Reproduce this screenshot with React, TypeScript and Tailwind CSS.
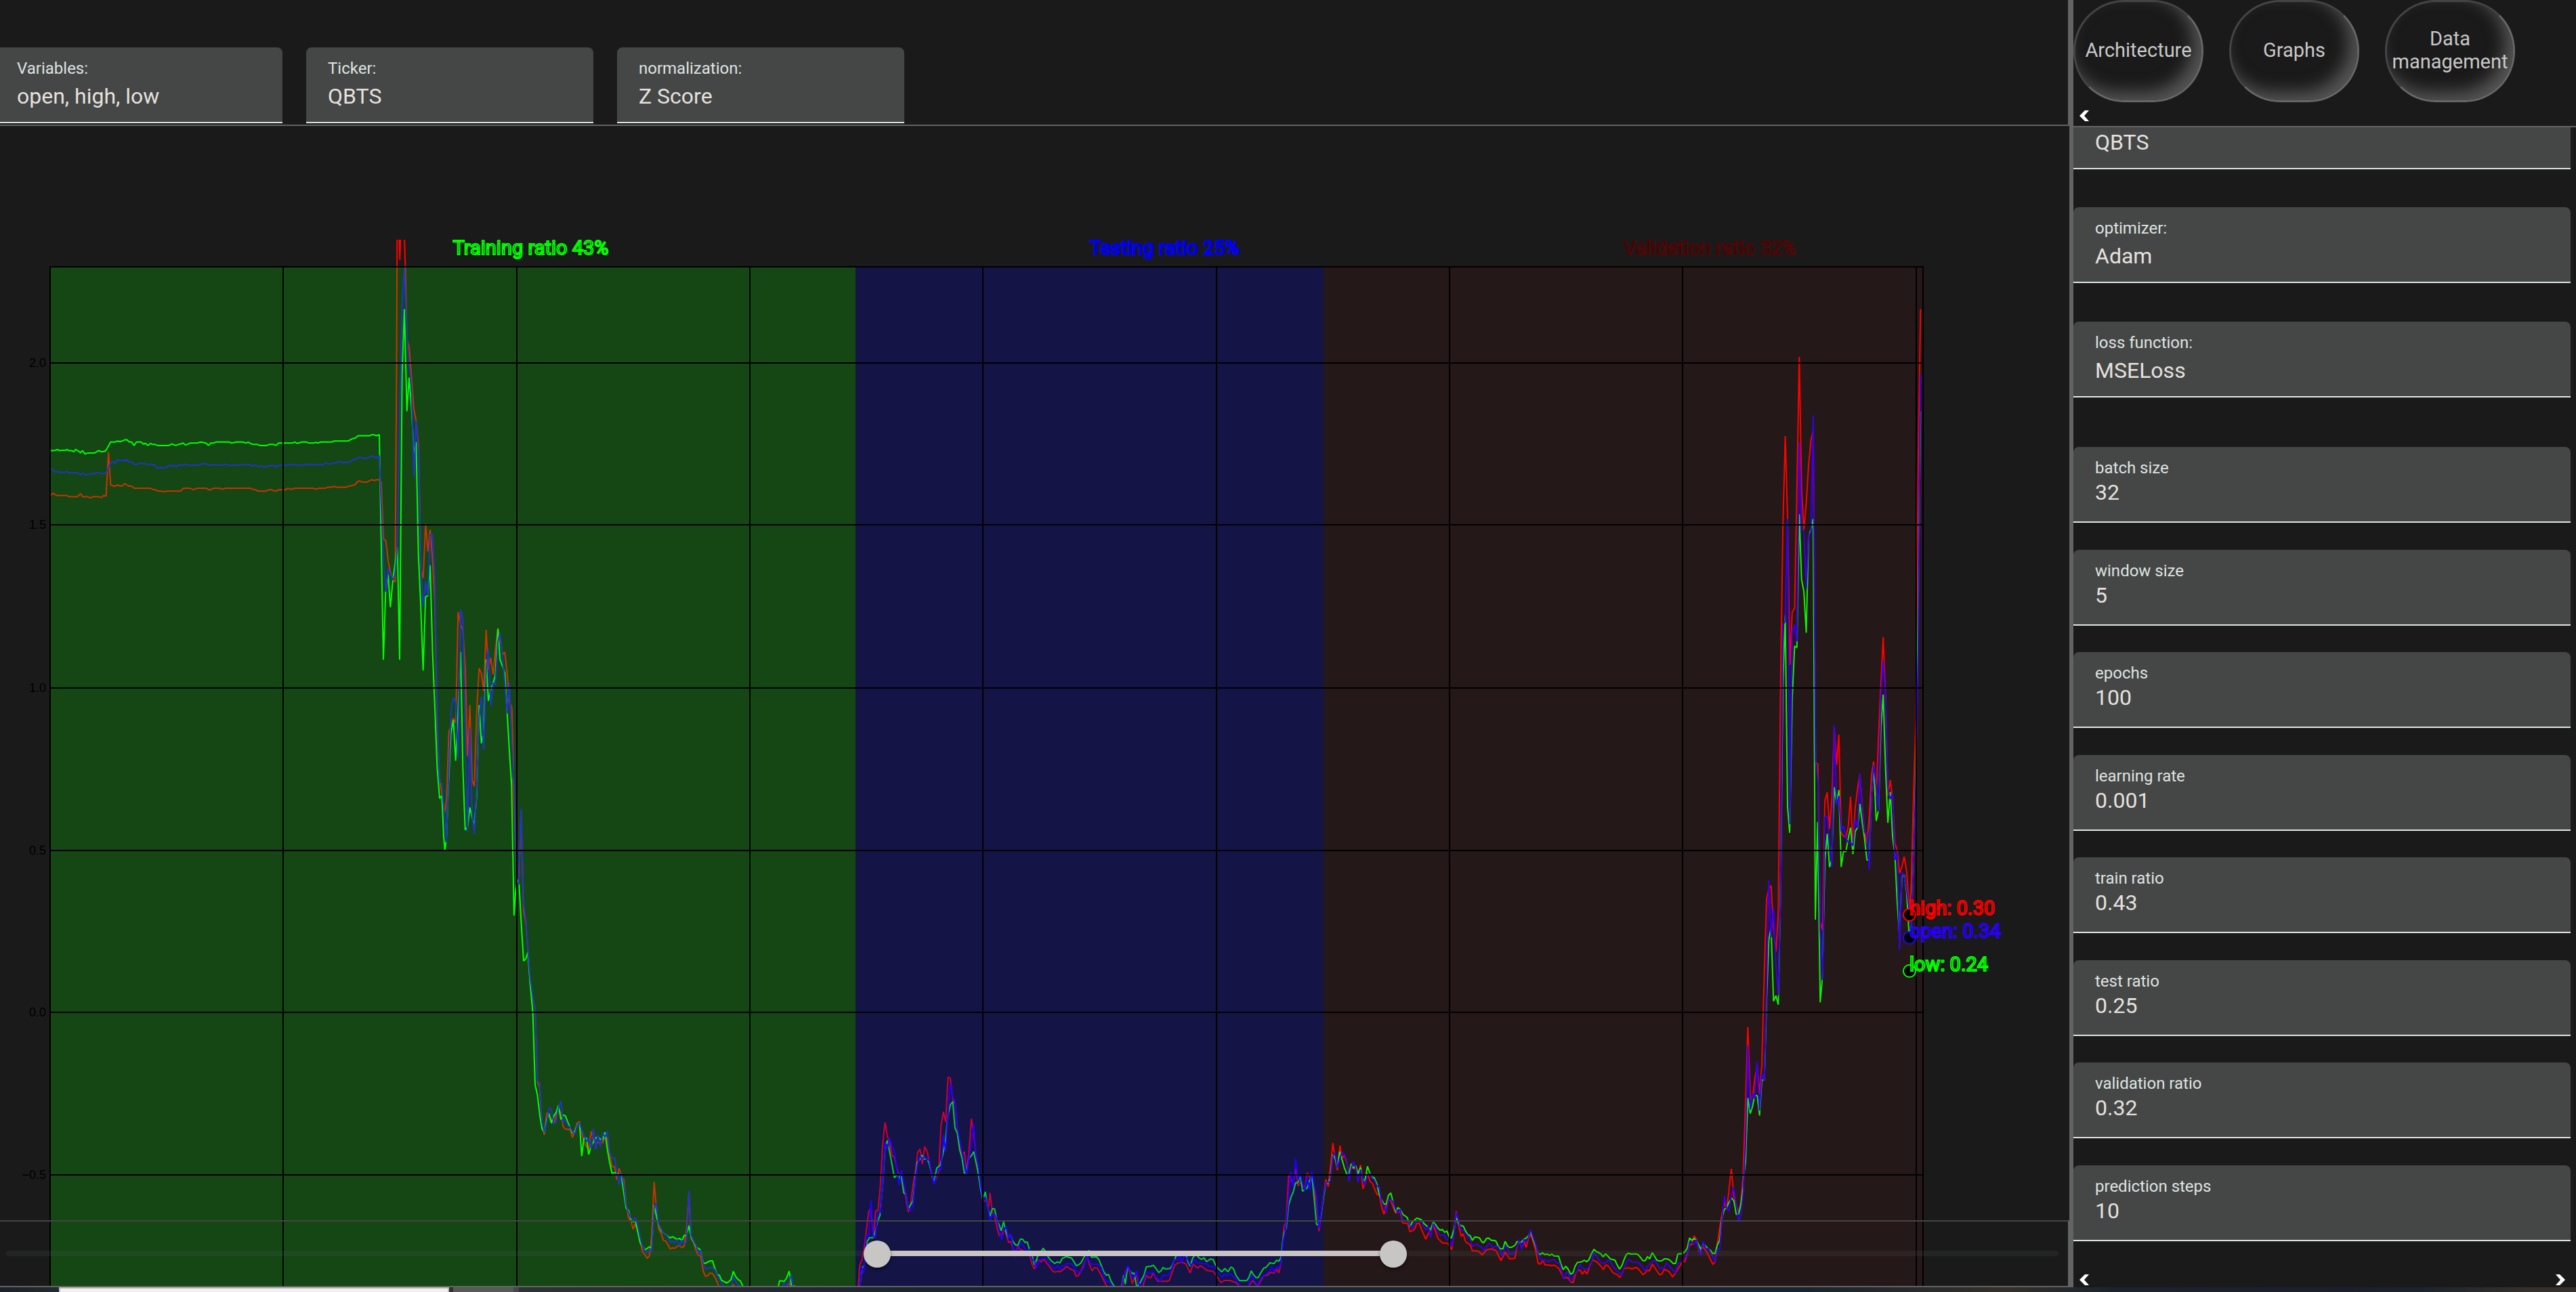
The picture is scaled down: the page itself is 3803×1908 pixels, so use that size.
import React, { useState } from "react";

/* ---------- chart data ---------- */

type Segment = { origin: [number, number]; scale: [number, number]; points: string };

/* Sections of the time axis; each stores its samples on its own local grid. */
const intro = { origin: [0, 340] as [number, number], scale: [1.96, 1.96] as [number, number] };
const peak = { origin: [550, 340] as [number, number], scale: [3, 1.7422] as [number, number] };
const fall = { origin: [700, 1150] as [number, number], scale: [2.4123, 2.0686] as [number, number] };
const test = { origin: [1240, 1550] as [number, number], scale: [1.7422, 3] as [number, number] };
const valley = { origin: [1850, 1650] as [number, number], scale: [2.0907, 3] as [number, number] };
const climb = { origin: [2400, 1250] as [number, number], scale: [3, 2.383] as [number, number] };
const finale = { origin: [2450, 400] as [number, number], scale: [2.6133, 1.4255] as [number, number] };

const low: Segment[] = [
  { ...intro, points: "145,637 153,638 160,637 166,635 173,638 180,637 188,637 194,635 200,638 207,638 214,641 219,634 225,638 233,644 239,638 246,648 253,645 260,645 273,645 280,641 286,638 293,641 300,641 306,638 313,626 320,613 333,613 340,610 347,612 354,610 360,607 367,606 374,613 381,613 388,623 395,613 408,613 415,619 421,617 428,623 435,617 442,620 449,620 456,623 489,623 496,619 502,620 509,623 516,620 522,619 530,616 537,622 544,619 550,616 571,616 580,613 587,614 597,617 603,623 610,616 617,616 624,613 664,613 670,616 685,613 704,613 711,616 718,613 725,617 732,620 745,620 752,623 772,623 779,620 792,620 799,623 806,616 846,616 853,613 860,617 874,613 887,613 894,616 907,616 914,614 920,616 928,613 960,613 967,610 1008,610 1015,606 1021,603 1028,602 1036,595 1069,595 1076,592 1082,592 1089,595 1096,592" },
  { ...peak, points: "30,526 37,760 48,1105 58,932 69,886 79,970 90,900 100,858 110,815 120,1105 131,370 141,203 152,466 162,379 172,450 183,575 193,545 203,835 213,960 224,1133 235,943 245,940 255,862 266,1090 276,1230 286,1380 297,1462 307,1455 315,1560 320,1595 327,1568 335,1440 347,1295 358,1260 368,1365 379,1240 390,1085 400,1380 410,1543 421,1535 431,1485 441,1510 451,1530 461,1455 472,1222 482,1320 492,1290 503,1104 513,1211 524,1180 534,1165 544,1145 555,1025 565,1105 576,1122 586,1140 596,1240 606,1340 616,1430" },
  { ...fall, points: "133,0 136,150 142,418 148,340 155,308 160,320 167,430 176,557 184,550 191,530 200,630 209,715 217,935 225,965 234,1030 242,1070 250,1080 259,1040 266,1022 275,1052 284,1030 292,1020 300,998 309,1041 317,1027 325,1030 334,1050 350,1082 359,1078 367,1058 375,1050 383,1153 391,1098 400,1098 408,1148 417,1120 425,1110 433,1097 442,1095 450,1102 458,1102 466,1080 474,1130 482,1170 491,1205 500,1203 508,1205 516,1210 524,1212 533,1265 541,1312 549,1318 558,1345 566,1354 574,1350 583,1385 591,1417 600,1430 608,1440 624,1430 632,1433 641,1304 649,1335 657,1362 666,1380 674,1388 682,1392 690,1398 698,1403 706,1399 714,1403 724,1408 732,1404 740,1412 748,1395 756,1395 765,1365 773,1400 782,1415 790,1430 807,1440 816,1480 824,1480 840,1473 849,1473 857,1495 865,1515 873,1516 881,1532 898,1540 906,1537 915,1530 923,1505 931,1520 940,1530 948,1534 958,1552 1000,1600 1080,1560 1088,1534 1096,1534 1104,1536 1113,1525 1122,1504 1130,1547 1145,1552 1200,1640 1350,1640" },
  { ...test, points: "45,1100 51,1050 57,965 62,960 70,850 76,833 86,833 92,800 97,760 103,735 110,600 116,430 122,403 128,455 134,510 140,568 146,555 152,570 157,550 164,635 170,640 176,705 183,685 188,670 194,570 199,500 205,487 211,467 217,485 223,485 229,500 235,540 242,590 249,525 258,512 264,470 271,410 278,290 284,245 290,230 296,348 302,370 308,445 314,480 320,548 326,540 332,480 338,470 344,452 350,500 356,550 362,620 368,665 374,630 379,690 386,738 392,705 398,706 404,760 409,775 415,803 421,763 427,805 433,835 439,820 445,850 452,866 458,866 464,840 470,840 476,855 482,852 488,890 494,910 500,953 506,930 512,898 518,893 523,880 530,898 536,920 543,935 553,948 559,940 566,945 572,925 583,917 596,924 602,940 608,958 614,953 620,945 626,925 635,900 641,890 647,920 660,918 666,930 672,955 679,985 685,1000 691,996 697,1025 706,1050 715,1100 724,1050 730,1000 734,1040 740,960 746,980 752,992 757,990 763,1050 770,1040 776,1020 782,1000 788,962 800,960 806,955 812,968 820,988 826,980 831,965 837,972 849,970 855,955 861,930 867,905 875,900 890,905 895,940 901,960 907,925 915,905 922,920 930,930 936,922 943,940 953,928 960,930 966,955 972,968 982,985 990,970 998,985 1006,963 1012,970 1018,998 1028,1024 1046,1024 1052,1010 1058,980 1064,998 1070,1010 1076,1010 1082,990 1090,968 1096,965 1106,945 1117,948 1123,933 1129,938 1135,918 1138,860 1142,815 1148,790 1154,690 1160,655 1166,630 1172,590 1178,590 1184,555 1190,628 1196,620 1202,613 1208,580 1214,560 1220,665 1226,775 1232,778 1238,730 1244,650" },
  { ...valley, points: "225,292 232,290 238,270 246,165 253,180 260,225 267,152 275,190 282,225 289,250 296,250 303,206 310,225 317,215 324,250 332,222 339,282 346,275 353,217 361,250 367,265 374,268 382,295 389,340 396,365 404,384 411,385 418,345 425,335 432,375 440,420 447,400 454,408 462,430 470,438 476,445 484,485 491,465 498,455 505,447 513,450 520,455 527,470 535,480 541,490 548,497 556,465 563,475 570,490 577,500 584,497 591,510 598,503 606,533 612,535 620,495 627,445 634,470 641,480 649,482 656,505 663,520 670,525 677,545 684,530 692,532 699,535 706,552 712,556 720,537 727,535 735,545 742,545 749,548 756,570 763,583 771,583 778,550 785,570 792,577 799,575 808,567 815,550 822,555 829,552 836,540 843,535 850,525 857,507 864,540 872,570 879,600 886,608 893,600 900,608 908,606 915,612 922,606 929,614 943,615 950,650 957,675 965,660 972,672 980,695 987,690 994,660 1001,643 1008,642 1015,640 1022,633 1030,640 1037,630 1044,605 1052,585 1059,595 1067,600 1073,605 1080,618 1088,605 1095,615 1103,628 1110,630 1117,633 1124,655 1131,673 1138,658 1145,630 1152,608 1159,602 1167,606 1174,605 1181,605 1188,608 1195,620 1203,635 1210,635 1217,617 1224,627 1232,600 1239,615 1246,633 1254,637 1262,635 1269,627 1276,627 1283,630 1290,638 1297,648 1304,648 1311,605 1326,604 1333,595 1340,580 1347,535 1354,545 1361,537 1368,545 1375,565 1382,585 1389,560 1396,570 1405,582 1412,590 1419,604 1426,602 1433,565 1440,545 1447,450 1454,408 1461,402 1468,378 1477,358 1484,370 1491,430 1498,430 1505,390 1512,320" },
  { ...climb, points: "523,1160 531,1110 541,885 552,940 562,915 572,875 583,878 593,947 603,822 614,822 624,540 634,330 644,285 655,545 665,525" },
  { ...finale, points: "458,1545 467,1300 476,870 485,725 494,1128 502,1183 512,900 521,790 530,793 539,512 548,650 557,675 566,762 575,560 584,545 593,522 601,1366 610,1160 620,1540 628,1490 638,1240 647,1185 656,1255 664,1240 674,1087 683,1120 692,1093 701,1255 710,1221 719,1223 728,1195 737,1172 746,1228 755,1180 764,1172 773,1122 782,1160 791,1195 800,1240 809,1240 818,1100 826,1040 836,1158 845,1135 854,960 863,892 872,1050 881,1162 890,1097 899,1190 908,1230 917,1330 926,1400 935,1275 944,1272 953,1305 962,1390 970,1390 980,1240 989,1050 998,700 1007,296" },
];

const open: Segment[] = [
  { ...intro, points: "145,690 152,692 159,700 166,698 173,701 186,701 193,698 200,702 225,702 233,708 239,702 246,707 253,708 260,705 272,705 280,702 286,701 293,704 300,705 307,702 313,690 320,673 327,670 334,675 340,663 347,668 354,665 361,669 367,663 374,672 381,670 388,677 395,679 408,673 415,676 422,676 428,679 435,677 449,680 456,690 463,685 468,690 475,687 482,686 489,680 496,683 503,680 509,686 516,680 530,680 537,677 543,680 577,680 585,676 597,676 604,680 617,680 624,677 632,680 645,680 651,677 658,680 698,680 704,677 711,680 718,677 732,683 739,680 746,683 759,683 765,687 772,683 786,681 792,680 799,686 806,680 833,680 840,677 847,680 854,678 860,680 874,680 880,677 887,680 893,677 907,680 914,677 921,680 928,677 934,680 941,673 948,676 962,675 975,672 981,669 988,672 1008,672 1021,665 1035,660 1042,657 1049,660 1062,660 1076,653 1089,660 1096,653" },
  { ...peak, points: "30,580 38,700 49,860 59,930 69,870 79,885 90,900 100,885 110,815 120,470 131,185 141,95 152,270 162,345 173,410 183,635 193,490 204,575 214,860 224,970 235,903 245,940 255,783 266,784 276,900 287,1270 297,1420 307,1422 317,1500 327,1575 337,1400 348,1235 358,1202 368,1215 379,1360 390,976 400,1000 410,1290 420,1548 431,1280 441,1500 451,1553 461,1440 472,1250 482,1200 492,1337 503,1130 513,1077 524,1224 534,1165 544,1170 555,1060 565,1035 576,1100 586,1170 597,1243 606,1163 616,1310 627,1430" },
  { ...fall, points: "142,0 147,140 151,325 159,322 167,92 176,380 184,430 191,520 200,610 209,665 217,705 225,925 233,928 242,1050 250,1080 259,1048 267,1005 275,1010 284,1055 292,1050 300,1005 309,985 317,1052 325,1042 334,1060 342,1065 350,1078 359,1085 367,1060 375,1050 383,1072 391,1088 400,1108 408,1098 417,1130 425,1068 433,1133 441,1087 450,1125 458,1083 466,1095 474,1077 483,1140 491,1160 500,1157 508,1205 516,1241 524,1203 533,1240 541,1300 549,1325 558,1340 566,1350 574,1340 583,1365 591,1400 600,1430 608,1442 616,1447 624,1438 632,1445 641,1310 649,1297 657,1360 666,1375 674,1388 682,1392 690,1400 698,1417 706,1410 714,1420 724,1408 732,1427 740,1410 748,1420 756,1415 765,1258 773,1395 782,1412 790,1425 800,1450 808,1440 816,1485 824,1497 849,1493 857,1500 873,1530 882,1540 890,1555 915,1550 923,1522 931,1535 940,1545 960,1570 1090,1560 1104,1540 1113,1550 1122,1535 1130,1515 1136,1560 1200,1640 1350,1640" },
  { ...test, points: "49,1100 56,965 61,990 68,825 74,830 80,668 86,830 91,832 98,720 104,722 110,600 116,412 122,440 128,393 134,430 140,450 146,520 152,600 158,535 164,590 170,640 176,705 182,713 188,695 194,575 200,510 206,470 212,485 218,475 224,490 230,487 236,550 242,597 248,560 254,525 260,535 266,378 272,450 278,290 284,150 290,210 296,230 302,340 308,400 314,450 320,500 326,558 332,480 338,420 344,328 350,470 356,510 362,600 368,660 374,655 380,695 386,762 392,730 398,730 404,755 410,800 416,843 422,800 428,783 434,840 440,815 446,885 452,890 458,885 464,857 470,862 476,885 482,892 488,885 494,930 500,935 506,968 512,930 518,930 525,925 530,925 540,950 548,965 553,972 560,955 566,975 572,958 578,960 583,948 596,950 602,960 608,985 620,985 627,965 636,915 642,940 648,952 660,950 666,955 672,965 679,1000 685,1030 691,1025 697,1040 706,1070 720,1100 728,1020 734,995 740,957 746,980 752,1010 758,1005 763,978 770,1045 780,1030 788,985 794,992 800,992 806,985 812,1005 824,1027 830,1000 842,1002 849,990 855,960 861,930 868,935 875,900 878,945 885,915 893,925 903,958 912,930 920,945 943,948 950,962 962,960 972,985 982,1010 990,992 996,1003 1004,992 1018,1015 1030,1050 1050,1050 1058,1000 1064,1020 1074,1045 1084,1010 1096,995 1106,980 1111,962 1117,985 1123,962 1129,970 1135,940 1140,850 1146,800 1152,700 1160,540 1166,610 1172,485 1178,580 1184,550 1190,590 1196,625 1202,565 1208,620 1214,540 1220,600 1226,650 1232,790 1238,720 1244,640" },
  { ...valley, points: "225,290 238,285 246,175 253,157 260,225 267,185 275,153 282,165 289,190 296,285 303,225 310,195 317,225 324,290 332,232 339,280 346,300 353,255 361,250 367,270 374,278 382,305 389,308 396,370 404,395 411,420 418,363 425,363 432,375 440,408 447,425 454,407 462,457 476,457 484,480 491,495 498,470 505,457 513,462 520,462 527,485 534,500 541,482 548,533 556,470 563,485 570,508 577,523 591,520 598,543 606,537 613,573 620,520 627,420 634,455 641,497 649,500 656,515 670,540 677,572 684,565 692,563 699,572 706,575 714,592 722,570 729,558 742,580 749,570 756,575 770,615 778,570 785,580 792,608 808,600 815,570 822,542 829,587 836,540 843,555 850,530 857,497 864,530 872,562 879,600 886,625 893,635 900,628 908,640 922,633 929,630 936,645 946,645 953,685 959,717 966,690 972,683 980,728 990,700 1001,680 1009,650 1016,668 1030,675 1042,655 1052,600 1059,612 1067,630 1074,645 1088,645 1097,632 1103,640 1110,660 1124,682 1138,700 1145,665 1152,645 1160,630 1170,642 1190,643 1200,660 1210,680 1218,658 1230,643 1240,632 1247,650 1254,668 1268,670 1276,645 1290,668 1304,690 1311,648 1325,640 1333,618 1340,618 1347,552 1354,555 1361,565 1368,543 1375,580 1382,612 1389,548 1397,583 1405,580 1412,600 1426,640 1433,585 1440,587 1447,460 1455,347 1462,405 1469,415 1476,345 1483,310 1491,380 1499,463 1506,430 1514,320" },
  { ...climb, points: "521,1200 531,1050 541,700 552,927 562,870 572,888 582,757 593,930 603,800 614,825 624,500 634,118 644,320 655,215 665,420" },
  { ...finale, points: "458,1525 467,1310 476,745 485,738 494,522 503,1165 512,760 521,745 530,780 539,361 548,545 557,547 566,670 575,558 584,550 593,304 602,1030 611,1075 620,1385 629,1493 638,1150 647,1148 656,1200 665,1255 674,956 683,1125 692,1105 701,1180 710,1168 719,1195 728,1203 737,1203 746,1210 755,1155 764,1172 773,1058 782,1130 791,1182 800,1182 809,1260 818,1100 826,1040 836,1085 845,1138 854,900 863,820 872,900 881,1090 890,1112 899,1100 908,1240 917,1225 926,1430 935,1265 944,1275 953,1300 962,1340 971,1385 980,1240 989,1080 998,800 1007,218" },
];

const high: Segment[] = [
  { ...intro, points: "147,767 153,761 160,765 166,768 193,768 200,771 225,771 233,762 239,771 253,771 262,775 270,771 286,771 293,774 300,768 307,770 314,642 320,737 327,740 334,741 340,737 347,740 354,740 361,733 367,737 374,741 381,741 388,747 435,747 442,750 449,751 456,755 468,755 475,758 482,755 523,755 530,747 550,747 560,751 570,747 597,747 604,751 610,751 617,747 637,747 644,750 651,747 725,747 732,750 739,751 746,755 770,755 779,751 785,751 792,754 799,755 806,751 826,751 833,747 840,750 854,747 907,747 914,750 921,747 941,747 948,744 960,744 967,741 974,744 1001,744 1008,741 1015,740 1028,736 1036,726 1042,726 1049,729 1062,729 1076,722 1083,725 1089,722 1096,722" },
  { ...peak, points: "30,642 38,648 49,795 59,799 69,850 79,880 90,900 100,905 106,400 109,0 117,0 121,76 125,0 140,0 146,110 152,280 162,300 173,385 183,460 193,490 204,555 214,870 224,895 235,755 245,826 255,770 266,850 276,960 287,1300 297,1410 307,1450 318,1500 328,1465 338,1290 348,1275 358,1255 368,1268 379,982 390,1015 400,1028 411,1130 420,1353 431,1222 441,1415 451,1430 461,1240 472,1127 482,1140 492,1186 503,1028 513,1130 523,1100 534,1143 544,1080 555,1025 565,1050 576,1092 586,1086 596,1140 606,1212 617,1230 624,1380" },
  { ...fall, points: "139,0 146,180 151,320 159,325 167,100 176,405 184,440 192,530 200,630 209,670 217,705 225,928 233,940 242,1060 250,1088 259,1020 267,1030 275,1040 284,1052 292,1030 300,1010 309,1020 317,1063 325,1070 342,1072 350,1096 359,1075 367,1052 375,1047 383,1080 391,1110 400,1125 408,1130 417,1077 425,1105 433,1112 458,1112 466,1090 474,1100 483,1150 491,1185 500,1185 508,1225 516,1190 524,1212 533,1225 541,1295 549,1340 558,1350 566,1376 574,1360 583,1385 591,1415 600,1446 608,1453 616,1465 624,1458 632,1400 641,1232 649,1310 657,1375 666,1390 674,1410 682,1412 698,1436 706,1433 714,1435 724,1428 732,1427 740,1432 748,1428 756,1380 765,1265 773,1405 782,1418 790,1440 798,1456 807,1458 816,1505 824,1520 832,1518 840,1510 849,1512 857,1522 865,1537 873,1555 915,1560 923,1545 930,1560 1100,1565 1122,1540 1135,1570 1200,1640 1350,1640" },
  { ...test, points: "45,1100 51,955 57,930 63,870 68,800 74,718 80,700 86,835 92,713 98,713 104,600 110,420 116,322 122,385 128,410 134,468 140,478 146,520 152,560 158,555 164,610 170,660 176,720 182,680 188,600 194,540 200,457 206,440 212,508 218,430 224,450 230,500 236,560 242,590 248,570 254,540 260,340 266,275 272,320 278,122 284,127 290,220 296,240 302,350 308,420 314,470 320,452 326,540 332,450 338,306 344,370 350,470 356,530 362,610 368,670 376,672 382,700 386,635 392,720 398,735 404,790 410,825 416,820 422,798 428,820 434,855 440,850 446,890 452,915 458,870 464,885 475,895 482,900 488,910 494,950 500,973 506,930 518,940 524,928 536,955 548,983 554,986 560,982 566,985 572,978 584,960 590,970 602,980 608,1005 614,1000 620,980 628,950 636,915 642,955 649,980 655,965 662,968 672,1000 685,1045 700,1070 722,1090 734,985 740,960 746,990 752,1038 758,1010 764,1000 770,1070 780,1045 788,1000 794,1010 800,1010 806,990 812,1010 818,1027 842,1027 848,1020 855,985 861,955 870,945 880,942 890,950 901,990 908,950 920,968 926,958 932,962 943,978 960,983 968,1000 980,1033 988,1023 1003,1023 1018,1032 1030,1050 1050,1050 1062,1023 1074,1050 1090,1003 1100,1000 1106,988 1117,990 1123,972 1129,990 1135,940 1142,785 1148,760 1154,555 1160,570 1166,600 1172,525 1178,605 1184,590 1190,600 1196,615 1202,545 1208,565 1214,570 1220,620 1226,690 1232,805 1238,730 1244,640 1250,575" },
  { ...valley, points: "232,307 238,230 246,114 253,180 260,235 268,125 275,180 282,170 289,200 296,250 303,225 310,225 317,230 324,250 332,211 339,318 346,290 353,245 361,285 368,292 375,318 383,342 390,345 397,400 404,430 411,390 418,362 425,370 432,398 440,425 447,420 454,420 462,468 477,470 484,507 491,503 498,497 505,470 513,470 520,497 533,540 541,515 548,500 556,475 563,505 570,535 584,557 598,557 606,567 613,587 620,510 627,415 634,475 642,528 648,515 656,552 670,565 677,592 692,592 699,597 707,610 720,588 735,583 750,590 765,635 778,598 792,627 808,625 815,570 822,550 829,580 836,548 843,577 850,535 857,520 864,550 872,590 880,648 887,650 894,632 901,655 915,655 922,658 930,655 943,668 952,692 958,712 972,710 980,730 988,733 996,690 1003,678 1010,678 1016,695 1023,680 1031,695 1040,655 1048,632 1060,640 1074,660 1081,675 1088,655 1095,657 1103,672 1110,688 1124,697 1131,710 1138,695 1145,670 1160,667 1168,672 1182,665 1190,673 1203,697 1210,690 1217,677 1224,680 1232,650 1239,665 1254,697 1262,695 1269,673 1276,678 1283,683 1295,707 1304,690 1311,672 1325,640 1333,638 1340,605 1347,563 1354,565 1361,525 1368,540 1377,598 1389,575 1397,590 1405,610 1419,652 1426,640 1433,560 1440,490 1447,430 1455,375 1462,408 1469,320 1476,228 1484,350 1491,385 1499,430 1506,370 1512,270" },
  { ...climb, points: "529,950 541,635 553,892 563,880 573,810 583,775 593,870 603,770 612,500 624,185 634,150 644,138 655,280 666,370" },
  { ...finale, points: "458,1350 467,870 476,540 485,348 494,520 503,830 512,718 521,710 530,460 539,181 548,460 557,545 566,490 575,410 584,357 593,335 602,1035 611,1038 620,1370 629,1388 638,1115 647,1098 656,1175 665,1110 674,960 683,1040 692,976 701,1183 710,1190 719,1193 728,1170 737,1107 746,1210 755,1130 764,1090 773,1060 782,1125 791,1180 800,1205 809,1150 818,1060 826,1033 836,1105 845,980 854,870 863,771 872,900 881,1105 890,1072 899,1110 908,1205 917,1220 926,1268 935,1255 944,1233 953,1262 962,1330 964,1352 971,1290 980,1100 989,950 998,400 1007,81" },
];

const toPoints = (segments: Segment[]) =>
  segments
    .flatMap(({ origin, scale, points }) =>
      points.split(" ").map((pair) => {
        const [x, y] = pair.split(",").map(Number);
        return `${(origin[0] + x / scale[0]).toFixed(1)},${(origin[1] + y / scale[1]).toFixed(1)}`;
      }),
    )
    .join(" ");

const series = [
  { name: "high", color: "#ff0000", points: toPoints(high) },
  { name: "low", color: "#00ff00", points: toPoints(low) },
  { name: "open", color: "#2a00ff", points: toPoints(open) },
];

const regions = [
  { label: "Training ratio 43%", x: 74, width: 1189, fill: "rgba(0,255,0,0.2)", stroke: "#00ff00" },
  { label: "Testing ratio 25%", x: 1263, width: 691, fill: "rgba(0,0,255,0.2)", stroke: "#0000ff" },
  { label: "Validation ratio 32%", x: 1954, width: 885, fill: "rgba(255,0,0,0.05)", stroke: "#4d0808" },
];

const gridX = [74, 418, 763, 1107, 1451, 1796, 2140, 2484, 2829, 2839];
const gridY = [
  { y: 536, label: "2.0" },
  { y: 775, label: "1.5" },
  { y: 1016, label: "1.0" },
  { y: 1256, label: "0.5" },
  { y: 1495, label: "0.0" },
  { y: 1735, label: "−0.5" },
];

const markers = [
  { label: "high: 0.30", y: 1351, color: "#ff0000" },
  { label: "open: 0.34", y: 1385, color: "#2a00ff" },
  { label: "low: 0.24", y: 1434, color: "#00ff00" },
];

function Chart() {
  return (
    <svg
      className="block h-full w-full"
      viewBox="0 186 3055 1715"
      preserveAspectRatio="xMinYMin meet"
      role="img"
      aria-label="Normalized open, high and low prices"
    >
      <defs>
        <clipPath id="plot">
          <rect x="74" y="354" width="2766" height="1560" />
        </clipPath>
      </defs>
      <g clipPath="url(#plot)" fill="none" strokeWidth="2" strokeLinejoin="bevel">
        {series.map((s) => (
          <polyline key={s.name} points={s.points} stroke={s.color} />
        ))}
      </g>
      {regions.map((r) => (
        <rect key={r.label} x={r.x} y="394" width={r.width} height="1520" fill={r.fill} />
      ))}
      <g stroke="#000" strokeWidth="2">
        <line x1="73" x2="2840" y1="394" y2="394" />
        {gridX.map((x) => (
          <line key={x} x1={x} x2={x} y1="394" y2="1914" />
        ))}
        {gridY.map((g) => (
          <line key={g.y} x1="74" x2="2839" y1={g.y} y2={g.y} />
        ))}
      </g>
      <g className="font-['Liberation_Sans',sans-serif] text-[18px]" textAnchor="end" fill="#000">
        {gridY.map((g) => (
          <text key={g.label} x="68" y={g.y + 6}>
            {g.label}
          </text>
        ))}
      </g>
      <g className="font-[Roboto,sans-serif] text-[29px]" fill="#000" strokeWidth="2">
        {regions.map((r) => (
          <text key={r.label} x={r.x + r.width / 2} y="376" stroke={r.stroke}>
            {r.label}
          </text>
        ))}
        {markers.map((m) => (
          <circle key={m.label} cx="2819" cy={m.y} r="9" stroke={m.color} />
        ))}
        {markers.map((m) => (
          <text key={m.label} x="2819" y={m.y} stroke={m.color}>
            {m.label}
          </text>
        ))}
      </g>
    </svg>
  );
}

/* ---------- controls ---------- */

const fieldBox =
  "flex h-[112px] shrink-0 flex-col rounded-t-lg border-b-2 border-[#e0e6e4] bg-[#444746] px-8 pt-4";
const labelText = "text-[24px] leading-[30px] text-[#dfe3e1]";
const valueText =
  "block w-full appearance-none border-0 bg-transparent p-0 text-[32px] leading-[38px] text-[#e6e1df] outline-none";

function SelectField({ id, label, value, className }: { id: string; label: string; value: string; className: string }) {
  return (
    <div className={`${fieldBox} gap-[7px] ${className}`}>
      <label htmlFor={id} className={labelText}>
        {label}
      </label>
      <select id={id} defaultValue={value} className={valueText}>
        <option>{value}</option>
      </select>
    </div>
  );
}

function InputField({ id, label, value }: { id: string; label: string; value: string }) {
  return (
    <div className={`${fieldBox} gap-0.5`}>
      <label htmlFor={id} className={labelText}>
        {label}
      </label>
      <input id={id} defaultValue={value} className={valueText} />
    </div>
  );
}

function Chevron({ dir }: { dir: "left" | "right" }) {
  return (
    <svg viewBox="0 0 14 16" className="h-4 w-3.5" fill="#fff" aria-hidden="true">
      {dir === "left" ? <path d="M8 0H14L7 8L14 16H8L0 8Z" /> : <path d="M6 0H0L7 8L0 16H6L14 8Z" />}
    </svg>
  );
}

const tabs = ["Architecture", "Graphs", "Data management"];

const inputs = [
  ["batch size", "32"],
  ["window size", "5"],
  ["epochs", "100"],
  ["learning rate", "0.001"],
  ["train ratio", "0.43"],
  ["test ratio", "0.25"],
  ["validation ratio", "0.32"],
  ["prediction steps", "10"],
];

const thumb =
  "pointer-events-none absolute inset-x-0 top-0 h-10 w-full appearance-none bg-transparent [&::-webkit-slider-thumb]:pointer-events-auto [&::-webkit-slider-thumb]:size-10 [&::-webkit-slider-thumb]:appearance-none [&::-webkit-slider-thumb]:rounded-full [&::-webkit-slider-thumb]:bg-[#c8c6c4] [&::-webkit-slider-thumb]:shadow-[0_3px_4px_rgba(0,0,0,0.5)]";

function RangeSlider() {
  const [from, setFrom] = useState(4234);
  const [to, setTo] = useState(6783);
  return (
    <div className="relative mr-3.5 ml-[9px] h-10">
      <div className="absolute inset-x-0 top-[15px] h-2 rounded bg-[rgba(80,90,85,0.18)]" />
      <div
        className="absolute top-[15px] h-2 bg-[#c8c4c4]"
        style={{ left: `${from / 100}%`, width: `${(to - from) / 100}%` }}
      />
      <input
        type="range"
        aria-label="Range start"
        min={0}
        max={10000}
        value={from}
        onChange={(e) => setFrom(Number(e.target.value))}
        className={thumb}
      />
      <input
        type="range"
        aria-label="Range end"
        min={0}
        max={10000}
        value={to}
        onChange={(e) => setTo(Number(e.target.value))}
        className={thumb}
      />
    </div>
  );
}

export default function App() {
  return (
    <div className="flex h-screen flex-col overflow-hidden bg-[#1a1a1a] font-[Roboto,sans-serif]">
      <div className="flex min-h-0 flex-1">
        <main className="flex min-w-0 flex-1 flex-col">
          <header className="flex h-[186px] shrink-0 items-end gap-[35px] border-r-2 border-b-2 border-[#636363] pb-0.5">
            <SelectField id="variables" label="Variables:" value="open, high, low" className="-ml-[7px] w-[424px]" />
            <SelectField id="ticker" label="Ticker:" value="QBTS" className="w-[424px]" />
            <SelectField id="normalization" label="normalization:" value="Z Score" className="w-[424px]" />
          </header>
          <section className="relative min-h-0 flex-1 overflow-hidden">
            <Chart />
            <div className="absolute inset-x-0 bottom-0 h-[99px] border-t-2 border-r-2 border-b-2 border-[#636363] border-t-[#444] pt-7">
              <RangeSlider />
            </div>
          </section>
        </main>

        <aside className="relative flex w-[748px] shrink-0 flex-col border-l-6 border-[#636363]">
          <nav className="flex h-[188px] shrink-0 flex-col border-b-2 border-[#636363]">
            <div className="flex gap-[38px]">
              {tabs.map((t) => (
                <button
                  key={t}
                  type="button"
                  className="flex h-[151px] w-48 items-center justify-center rounded-[75px] border-3 border-[#444] border-r-[#666] border-b-[#666] pb-1 text-center text-[29px] leading-[34px] text-[#c8c8c8] shadow-[inset_-12px_-12px_24px_#555]"
                >
                  {t}
                </button>
              ))}
            </div>
            <button type="button" aria-label="Collapse header" className="mt-3 ml-[9px] h-4 w-3.5">
              <Chevron dir="left" />
            </button>
          </nav>
          <div className="min-h-0 flex-1 overflow-hidden pr-2">
            <form className="flex flex-col">
              <div className="mb-14 h-[62px] shrink-0 border-b-2 border-[#e0e6e4] bg-[#444746] px-8 pt-[3px]">
                <select aria-label="Ticker" defaultValue="QBTS" className={valueText}>
                  <option>QBTS</option>
                </select>
              </div>
              <SelectField id="optimizer" label="optimizer:" value="Adam" className="mb-[57px]" />
              <SelectField id="loss" label="loss function:" value="MSELoss" className="mb-[73px]" />
              <div className="flex h-[1173px] flex-col justify-between">
                {inputs.map(([label, value]) => (
                  <InputField key={label} id={label.replace(" ", "-")} label={label} value={value} />
                ))}
              </div>
            </form>
          </div>
          <div className="absolute inset-x-0 bottom-[3px] flex justify-between pr-4 pl-[9px]">
            <button type="button" aria-label="Previous" className="h-4 w-3.5">
              <Chevron dir="left" />
            </button>
            <button type="button" aria-label="Next" className="h-4 w-3.5">
              <Chevron dir="right" />
            </button>
          </div>
        </aside>
      </div>

      <footer className="flex h-[7px] shrink-0 bg-[linear-gradient(90deg,#1a222c_0%,#252e30_3%,#2c3534_20%,#1c2430_36%,#1a2430_70%,#35302a_78%,#1a2430_82%,#1c1e2c_91%,#1a2430_94%,#35302a_98%)] pl-[87px]">
        <div className="w-[576px] border-2 border-b-0 border-[#bdbdbd] bg-[#f0f0f0]" />
        <div className="ml-1.5 w-[89px] bg-[#565b5a]" />
        <div className="w-2 bg-[#444847]" />
      </footer>
    </div>
  );
}
